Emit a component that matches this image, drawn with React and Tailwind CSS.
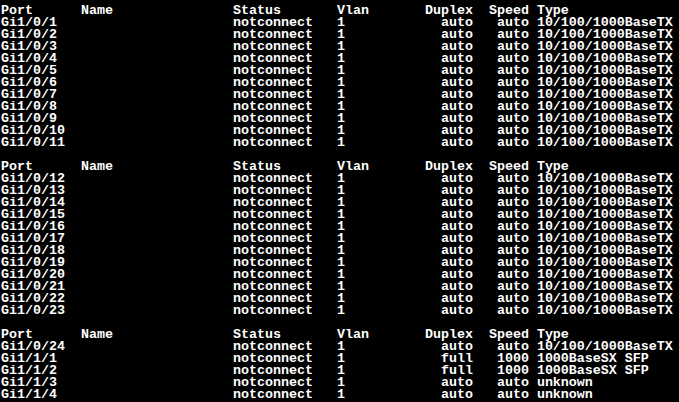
const header = "Port      Name               Status       Vlan       Duplex  Speed Type";

function row(port, duplex, speed, type) {
  return (
    port.padEnd(29, " ") +
    "notconnect   1".padEnd(26, " ") +
    duplex.padStart(4, " ") +
    " " +
    speed.padStart(6, " ") +
    " " +
    type
  );
}

function build() {
  const lines = [header];
  for (let i = 1; i <= 11; i++) lines.push(row(`Gi1/0/${i}`, "auto", "auto", "10/100/1000BaseTX"));
  lines.push("");
  lines.push(header);
  for (let i = 12; i <= 23; i++) lines.push(row(`Gi1/0/${i}`, "auto", "auto", "10/100/1000BaseTX"));
  lines.push("");
  lines.push(header);
  lines.push(row("Gi1/0/24", "auto", "auto", "10/100/1000BaseTX"));
  lines.push(row("Gi1/1/1", "full", "1000", "1000BaseSX SFP"));
  lines.push(row("Gi1/1/2", "full", "1000", "1000BaseSX SFP"));
  lines.push(row("Gi1/1/3", "auto", "auto", "unknown"));
  lines.push(row("Gi1/1/4", "auto", "auto", "unknown"));
  return lines;
}

export default function App() {
  const lines = build();
  return (
    <div className="w-[679px] h-[402px] overflow-hidden bg-black pt-[5px] pl-[1px]">
      <pre className="m-0 text-white font-bold text-[13.33px] leading-[12px] whitespace-pre" style={{ fontFamily: '"Liberation Mono", "DejaVu Sans Mono", monospace' }}>
        {lines.map((l, i) => (
          <div key={i} className="h-[12px]">{l || " "}</div>
        ))}
      </pre>
    </div>
  );
}
